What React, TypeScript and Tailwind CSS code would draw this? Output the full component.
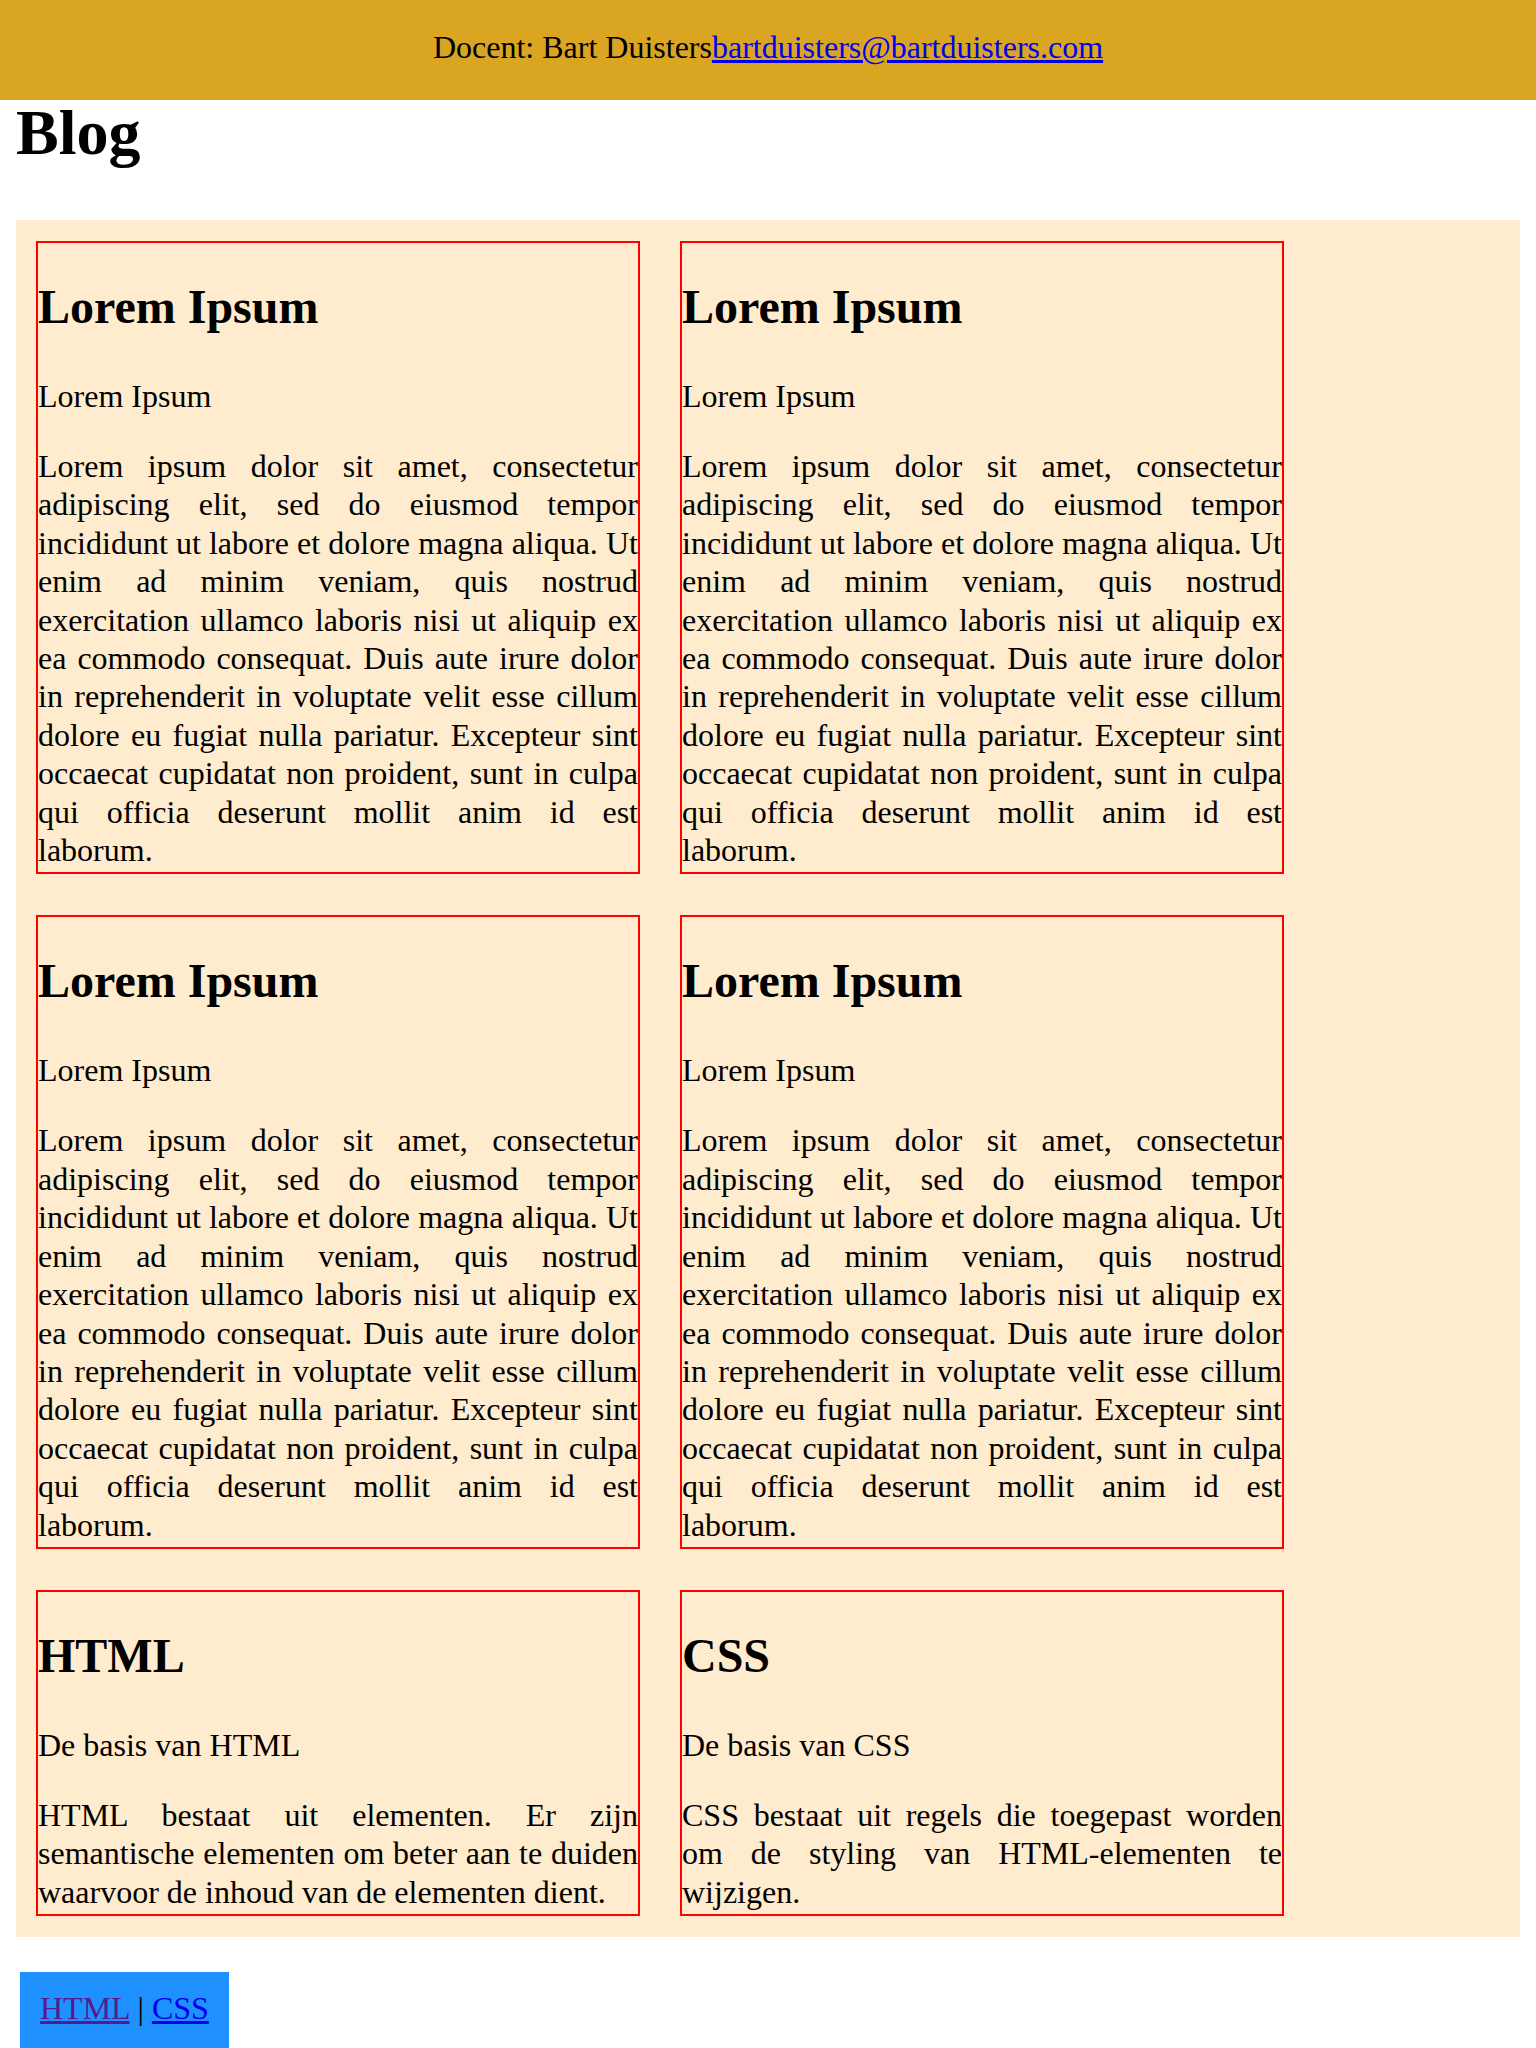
const lorem =
  "Lorem ipsum dolor sit amet, consectetur adipiscing elit, sed do eiusmod tempor incididunt ut labore et dolore magna aliqua. Ut enim ad minim veniam, quis nostrud exercitation ullamco laboris nisi ut aliquip ex ea commodo consequat. Duis aute irure dolor in reprehenderit in voluptate velit esse cillum dolore eu fugiat nulla pariatur. Excepteur sint occaecat cupidatat non proident, sunt in culpa qui officia deserunt mollit anim id est laborum.";

const posts = [
  { title: "Lorem Ipsum", subtitle: "Lorem Ipsum", body: lorem },
  { title: "Lorem Ipsum", subtitle: "Lorem Ipsum", body: lorem },
  { title: "Lorem Ipsum", subtitle: "Lorem Ipsum", body: lorem },
  { title: "Lorem Ipsum", subtitle: "Lorem Ipsum", body: lorem },
  {
    title: "HTML",
    subtitle: "De basis van HTML",
    body: "HTML bestaat uit elementen. Er zijn semantische elementen om beter aan te duiden waarvoor de inhoud van de elementen dient.",
  },
  {
    title: "CSS",
    subtitle: "De basis van CSS",
    body: "CSS bestaat uit regels die toegepast worden om de styling van HTML-elementen te wijzigen.",
  },
];

export default function App() {
  return (
    <div className="min-h-[2048px] bg-white text-black font-['Liberation_Serif','Times_New_Roman',serif] text-[32px] leading-[38.4px]">
      <header className="h-[100px] bg-[#daa520] pt-[28px] text-center">
        Docent: Bart Duisters
        <a href="#" className="text-[#0000ee] underline">
          bartduisters@bartduisters.com
        </a>
      </header>

      <main className="mx-[16px]">
        <h1 className="text-[64px] font-bold leading-[65px] mb-[55px]">Blog</h1>

        <section className="bg-[#ffebcd] flex flex-wrap gap-x-[40px] gap-y-[41px] px-[20px] pt-[21px] pb-[21px]">
          {posts.map((post, i) => (
            <article key={i} className="w-[604px] border-2 border-[#ff0000] pb-[3px]">
              <h2 className="text-[48px] font-bold leading-[57.6px] mt-[35px] mb-[41px]">{post.title}</h2>
              <p className="mb-[32px]">{post.subtitle}</p>
              <p className="text-justify">{post.body}</p>
            </article>
          ))}
        </section>
      </main>

      <nav className="ml-[20px] mt-[35px] w-fit bg-[#1e90ff] px-[20px] pt-[17px] pb-[25px]">
        <a href="#" className="text-[#551a8b] underline">
          HTML
        </a>{" "}
        |{" "}
        <a href="#" className="text-[#0000ee] underline">
          CSS
        </a>
      </nav>
    </div>
  );
}
